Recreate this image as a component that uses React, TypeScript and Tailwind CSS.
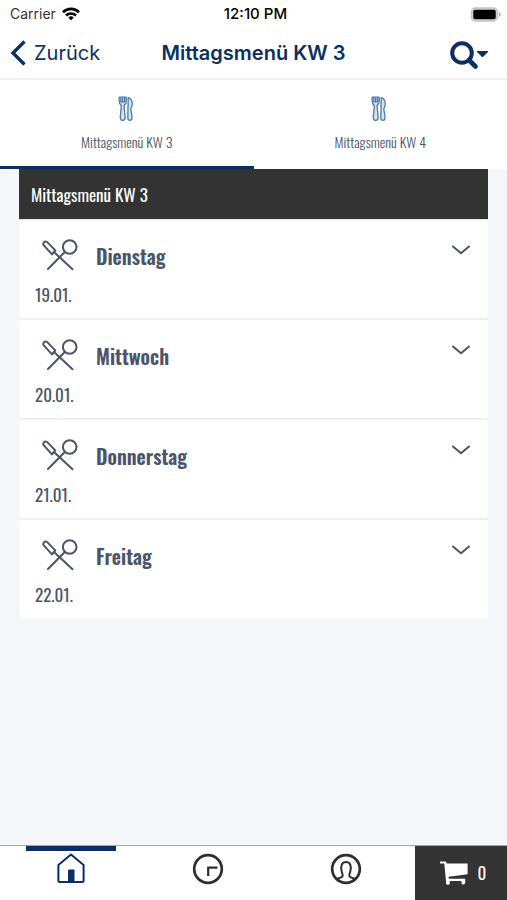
import React, { useState } from 'react'

const DAYS = [
  { name: 'Dienstag', date: '19.01.' },
  { name: 'Mittwoch', date: '20.01.' },
  { name: 'Donnerstag', date: '21.01.' },
  { name: 'Freitag', date: '22.01.' },
]

const WEEKS = ['Mittagsmenü KW 3', 'Mittagsmenü KW 4']

function WifiIcon() {
  return (
    <svg viewBox="0 0 18 14" className="h-[14px] w-[18px]" fill="none" stroke="currentColor" strokeWidth="2.6" aria-hidden="true">
      <path d="M1 5.2a11.4 11.4 0 0 1 16 0" />
      <path d="M4 8.5a7.2 7.2 0 0 1 10 0" />
      <path d="M9 13.4 6.3 10.6a3.9 3.9 0 0 1 5.4 0Z" fill="currentColor" stroke="none" />
    </svg>
  )
}

function BatteryIcon() {
  return (
    <svg viewBox="0 0 31 15" className="h-[15px] w-[31px]" aria-hidden="true">
      <rect x="1.500" y="1" width="26" height="13" rx="4" fill="#d4d4d4" stroke="#c4c4c4" strokeWidth="1.4" />
      <rect x="3.300" y="2.8" width="22.4" height="9.4" rx="1.6" fill="#000" />
      <path d="M29 5.2c2 .7 2 3.9 0 4.6Z" fill="#a3a3a3" />
    </svg>
  )
}

function SearchIcon() {
  return (
    <svg viewBox="0 0 40 30" className="h-[30px] w-[40px]" fill="none" aria-hidden="true">
      <circle cx="13" cy="13" r="9.8" stroke="currentColor" strokeWidth="4" />
      <path d="m20 20 6.500 6.500" stroke="currentColor" strokeWidth="4.600" strokeLinecap="round" />
      <path d="M28.400 11h10.200a.6.6 0 0 1 .4 1l-4.600 4.600a1.200 1.200 0 0 1-1.800 0L28 12a.6.6 0 0 1 .4-1Z" fill="currentColor" />
    </svg>
  )
}

function CutleryIcon() {
  return (
    <svg viewBox="0 0 18 26" className="h-[26px] w-[18px]" fill="none" stroke="#4d79a6" strokeWidth="1.300" strokeLinejoin="round" aria-hidden="true">
      <path d="M1.300 1.200h6.800c.6 3.600.3 6.400-2 8.200 0 4 1 8.600 1 12.300 0 3.500-4.800 3.500-4.800 0 0-3.700 1-8.300 1-12.300C1 7.600.7 4.800 1.300 1.200Z" fill="#d3e3f1" />
      <path d="M2.800 1.500v4.300h3.800V1.500M4.700 1.500v4.300" />
      <path d="M10.200 1.600c3.600.8 4.800 5.400 3.600 9-.4 1.200-1.200 1.800-1 2.800.5 2.400 1.200 5.200 1.200 8.300 0 3.500-4.200 3.500-4.200 0Z" fill="#d3e3f1" />
    </svg>
  )
}

function KnifeSpoonIcon() {
  return (
    <svg viewBox="0 0 36 32" className="h-8 w-9" fill="none" stroke="currentColor" strokeWidth="2" strokeLinecap="round" strokeLinejoin="round" aria-hidden="true">
      <circle cx="27.700" cy="8" r="6.800" />
      <path d="M22.800 13 6 30" />
      <path d="M1.600 6.200C.6 4 2.600 1.400 5 2.900L13.300 11.400 10 15.400Z" />
      <path d="M12 13 30.500 30.200" />
    </svg>
  )
}

function HomeIcon() {
  return (
    <svg viewBox="0 0 28 30" className="h-[30px] w-7" fill="none" aria-hidden="true">
      <path d="M14 1.500 26.600 12v15.500a1.500 1.500 0 0 1-1.500 1.500H2.900a1.500 1.500 0 0 1-1.500-1.500V12Z" stroke="currentColor" strokeWidth="2" strokeLinejoin="round" />
      <path d="M11 28V17.500a1 1 0 0 1 1-1h4.500a1 1 0 0 1 1 1V28Z" fill="currentColor" />
    </svg>
  )
}

function ClockIcon() {
  return (
    <svg viewBox="0 0 32 32" className="size-8" fill="none" stroke="currentColor" strokeWidth="2.200" aria-hidden="true">
      <circle cx="16" cy="16" r="13.800" strokeWidth="2.700" />
      <path d="M25.500 14.700h-9.300v8.300" />
    </svg>
  )
}

function UserIcon() {
  return (
    <svg viewBox="0 0 32 32" className="size-8" fill="none" stroke="currentColor" strokeWidth="2" strokeLinejoin="round" aria-hidden="true">
      <circle cx="16" cy="16" r="13.800" strokeWidth="2.700" />
      <path d="M6.500 26.200c1.800-1.100 5.300-1.100 6.100-3 .4-1.500-.2-3-.8-4.300-.8-2.500-.9-4.900-.2-6.800 1.400-4 7.400-4 8.800 0 .7 1.900.6 4.300-.2 6.800-.6 1.300-1.200 2.800-.8 4.300.8 1.900 4.300 1.900 6.100 3" />
    </svg>
  )
}

function CartIcon() {
  return (
    <svg viewBox="0 0 28 24" className="h-6 w-7" fill="currentColor" aria-hidden="true">
      <path d="M0 .5h5.800l1 2H27.600V13.200L8.500 15.700l.4 2H25.200v3.600a1.800 1.800 0 1 1-3.700.600v-2H9.800v2a1.900 1.900 0 1 1-3.700-.600L4.300 2.600H0Z" />
    </svg>
  )
}

const NAV = [
  { label: 'Start', icon: HomeIcon },
  { label: 'Verlauf', icon: ClockIcon },
  { label: 'Profil', icon: UserIcon },
]

function DayRow({ name, date }: { name: string; date: string }) {
  return (
    <li className="border-b-2 border-[#eef0f3] last:border-b-0">
      <button type="button" aria-expanded="false" className="block w-full rounded-sm bg-white px-4 pt-[19px] pb-[10px] text-left">
        <span className="flex items-start">
          <span className="ml-[7px] h-8 w-9 shrink-0">
            <KnifeSpoonIcon />
          </span>
          <span className="ml-[18px] flex-1 text-[20px] leading-[34px] font-semibold">{name}</span>
          <svg viewBox="0 0 18 10" className="mt-1.5 mr-0.5 h-[10px] w-[18px]" fill="none" stroke="currentColor" strokeWidth="2" strokeLinecap="round" strokeLinejoin="round" aria-hidden="true">
            <path d="m1 1.500 8 6.800 8-6.800" />
          </svg>
        </span>
        <span className="mt-[9px] block text-[17px] leading-[26px]">{date}</span>
      </button>
    </li>
  )
}

export default function App() {
  const [week, setWeek] = useState(0)

  return (
    <div className="flex min-h-screen flex-col bg-[#f4f6fa] font-['Oswald','Liberation_Sans_Narrow','Roboto_Condensed',sans-serif] text-[#4b5468]">
      <header className="border-b-2 border-[#f0f0f1] bg-white font-['Inter',sans-serif]">
        <div className="grid h-7 grid-cols-3 items-center pr-1.5 pl-2.5 text-black">
          <span className="flex items-center gap-1.5 text-[14px] leading-5 text-[#333]">
            Carrier
            <span className="text-black"><WifiIcon /></span>
          </span>
          <span className="text-center text-[15px] leading-5 font-medium">12:10 PM</span>
          <span className="flex justify-end"><BatteryIcon /></span>
        </div>
        <div className="grid h-[50px] grid-cols-[1fr_auto_1fr] items-center px-2.5 text-[#0b2f63]">
          <a href="#zurueck" className="flex items-center gap-2 text-[20px] leading-7">
            <svg viewBox="0 0 16 26" className="h-[26px] w-4" fill="none" stroke="currentColor" strokeWidth="3.400" aria-hidden="true">
              <path d="M14.500 1.500 3 13l11.500 11.500" />
            </svg>
            Zurück
          </a>
          <h1 className="text-[20px] leading-7 font-semibold">{WEEKS[week]}</h1>
          <button type="button" aria-label="Suche" className="mt-1 mr-2 justify-self-end">
            <SearchIcon />
          </button>
        </div>
      </header>

      <div role="tablist" className="grid grid-cols-2 bg-white">
        {WEEKS.map((label, idx) => (
          <button
            key={label}
            type="button"
            role="tab"
            aria-selected={week === idx}
            onClick={() => setWeek(idx)}
            className={`flex flex-col items-center border-b-[3px] pt-4 pb-3.5 ${week === idx ? 'border-[#0b2f63]' : 'border-white'}`}
          >
            <CutleryIcon />
            <span className="mt-2.5 text-[14px] leading-5 font-[350]">{label}</span>
          </button>
        ))}
      </div>

      <main className="flex-1 px-[19px]">
        <h2 className="bg-[#333] px-3 pt-0.5 text-[17px] leading-[48px] text-white">{WEEKS[week]}</h2>
        <ul className="border-t border-[#e2e3e5]">
          {DAYS.map(day => (
            <DayRow key={day.name} name={day.name} date={day.date} />
          ))}
        </ul>
      </main>

      <nav className="flex h-[55px] border-t border-[#a5a7aa] bg-white text-[#2e2e2e]">
        <div className="grid flex-1 grid-cols-3 pl-0.5">
          {NAV.map((item, idx) => {
            const Icon = item.icon
            return (
              <a key={item.label} href="#nav" aria-label={item.label} className={`flex flex-col items-center ${idx === 0 ? 'text-[#0b2f63]' : ''}`}>
                <span className={`mb-0.5 h-[5px] w-[90px] ${idx === 0 ? 'bg-[#0b2f63]' : ''}`} />
                <Icon />
              </a>
            )
          })}
        </div>
        <button type="button" aria-label="Warenkorb" className="flex w-[92px] items-center justify-center gap-2.5 bg-[#333] pl-1 text-[17px] text-white">
          <CartIcon />
          0
        </button>
      </nav>
    </div>
  )
}
